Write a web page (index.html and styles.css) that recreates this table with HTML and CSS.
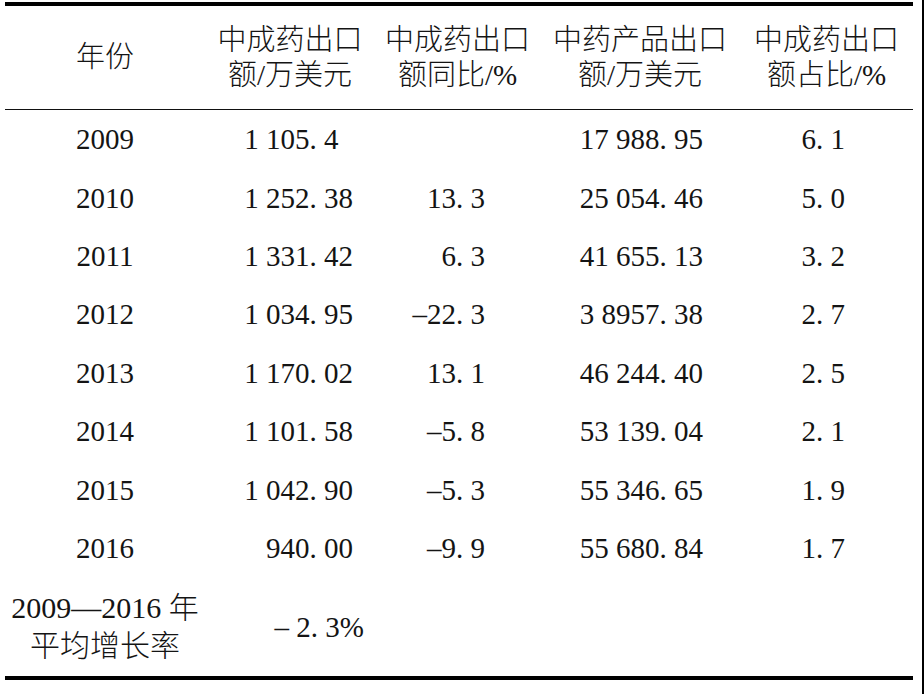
FILE: index.html
```html
<!DOCTYPE html>
<html lang="zh-CN">
<head>
<meta charset="utf-8">
<title>中成药出口额</title>
<link rel="stylesheet" href="styles.css">
</head>
<body>
<div class="page">
  <table class="data">
    <colgroup>
      <col class="c1"><col class="c2"><col class="c3"><col class="c4"><col class="c5">
    </colgroup>
    <thead>
      <tr>
        <th>年份</th>
        <th>中成药出口<br>额/万美元</th>
        <th>中成药出口<br>额同比/%</th>
        <th>中药产品出口<br>额/万美元</th>
        <th>中成药出口<br>额占比/%</th>
      </tr>
    </thead>
    <tbody>
      <tr><td class="yr">2009</td><td class="n2">1 105. 4<span class="ph">5</span></td><td class="n3"></td><td class="n4">17 988. 95</td><td class="n5">6. 1</td></tr>
      <tr><td class="yr">2010</td><td class="n2">1 252. 38</td><td class="n3">13. 3</td><td class="n4">25 054. 46</td><td class="n5">5. 0</td></tr>
      <tr><td class="yr">2011</td><td class="n2">1 331. 42</td><td class="n3">6. 3</td><td class="n4">41 655. 13</td><td class="n5">3. 2</td></tr>
      <tr><td class="yr">2012</td><td class="n2">1 034. 95</td><td class="n3">–22. 3</td><td class="n4">3 8957. 38</td><td class="n5">2. 7</td></tr>
      <tr><td class="yr">2013</td><td class="n2">1 170. 02</td><td class="n3">13. 1</td><td class="n4">46 244. 40</td><td class="n5">2. 5</td></tr>
      <tr><td class="yr">2014</td><td class="n2">1 101. 58</td><td class="n3">–5. 8</td><td class="n4">53 139. 04</td><td class="n5">2. 1</td></tr>
      <tr><td class="yr">2015</td><td class="n2">1 042. 90</td><td class="n3">–5. 3</td><td class="n4">55 346. 65</td><td class="n5">1. 9</td></tr>
      <tr><td class="yr">2016</td><td class="n2">940. 00</td><td class="n3">–9. 9</td><td class="n4">55 680. 84</td><td class="n5">1. 7</td></tr>
      <tr class="avg"><td class="yr">2009—2016 年<br>平均增长率</td><td class="n2 pct">– 2. 3%</td><td class="n3"></td><td class="n4"></td><td class="n5"></td></tr>
    </tbody>
  </table>
</div>
</body>
</html>
```
FILE: styles.css
```css
html, body {
  margin: 0;
  padding: 0;
  background: #fff;
}
.page {
  box-sizing: border-box;
  width: 924px;
  height: 694px;
  padding: 2px 0 0 5px;
  border-right: 2px solid #000;
  color: #141414;
  font-family: "Liberation Serif", "Noto Sans CJK SC", serif;
}
.data {
  width: 908px;
  border-collapse: collapse;
  table-layout: fixed;
  border-top: 4px solid #000;
  border-bottom: 4px solid #000;
}
.c1 { width: 200px; }
.c2 { width: 170px; }
.c3 { width: 165px; }
.c4 { width: 200px; }
.c5 { width: 173px; }
thead tr {
  border-bottom: 1.5px solid #111;
}
th {
  height: 103px;
  padding: 0;
  font-weight: 300;
  font-size: 29px;
  line-height: 35px;
  text-align: center;
  vertical-align: middle;
  white-space: nowrap;
  font-family: "Liberation Serif", "Noto Sans CJK SC", serif;
}
td {
  height: 58.4px;
  padding: 0;
  font-size: 29px;
  line-height: 34px;
  vertical-align: middle;
  white-space: nowrap;
}
.yr { text-align: center; }
.n2 { text-align: right; padding-right: 22px; }
.n3 { text-align: right; padding-right: 55px; }
.n4 { text-align: right; padding-right: 37px; }
.n5 { text-align: right; padding-right: 68px; }
.ph { visibility: hidden; }
.avg td {
  height: 99px;
  line-height: 38px;
}
.avg .yr {
  font-size: 30px;
  font-weight: 300;
}
.avg .pct {
  padding-right: 11px;
}
```
